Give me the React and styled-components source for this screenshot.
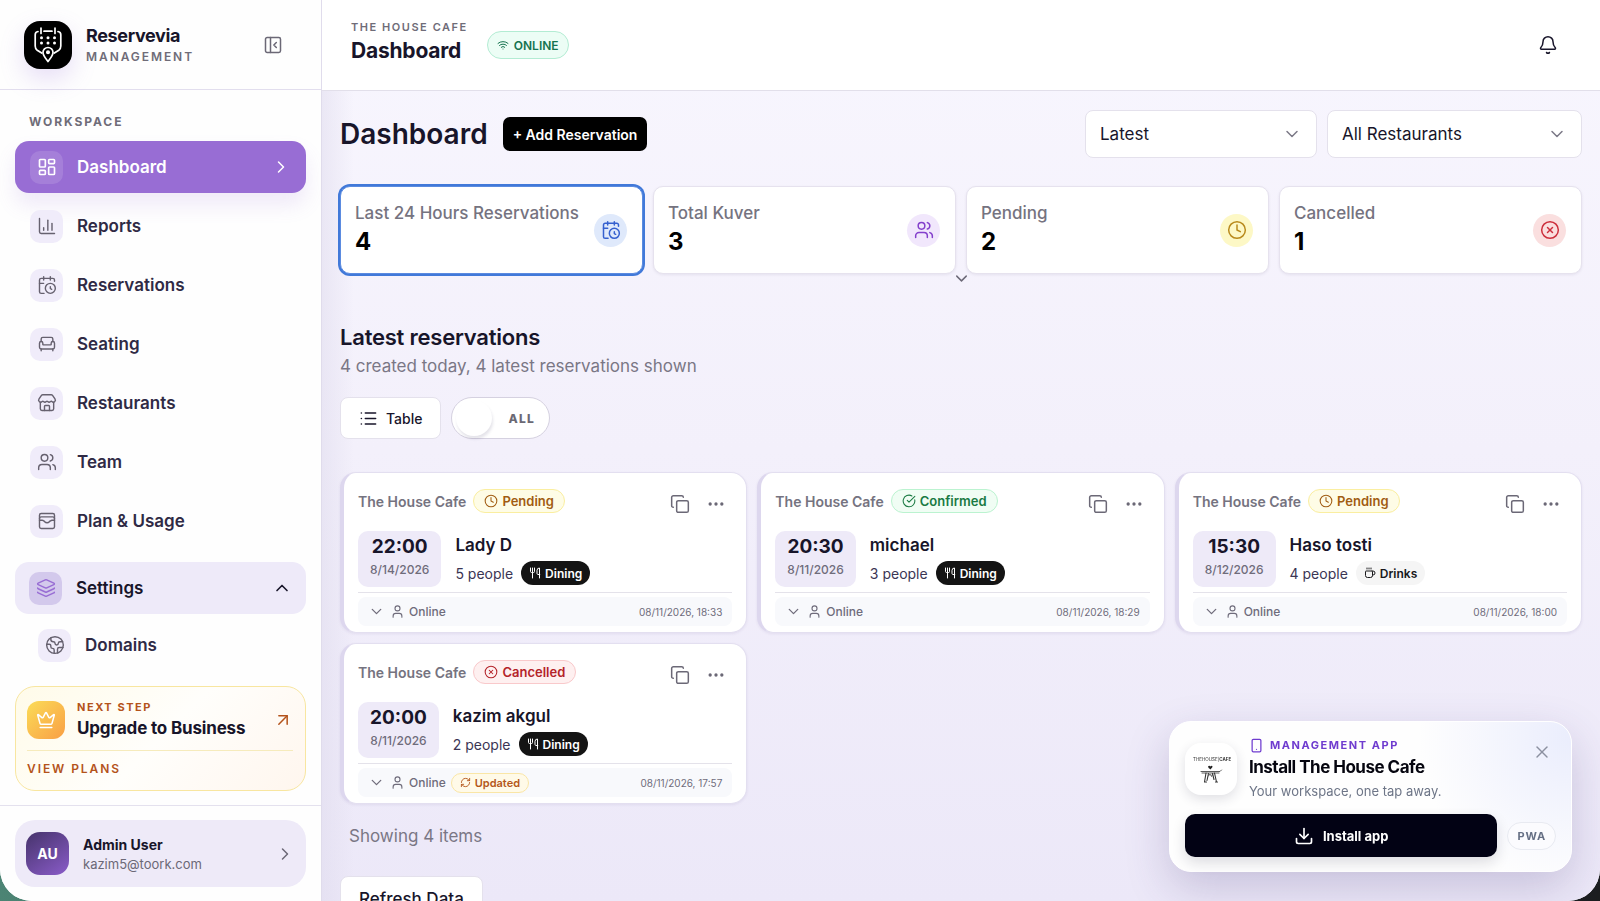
import { useState } from "react";
import styled, { createGlobalStyle, css } from "styled-components";
import {
    Armchair, ArrowUpRight, Bell, CalendarClock, ChartColumn, ChevronDown, ChevronRight, ChevronUp,
    CircleCheckBig, CircleX, Clock, Coffee, Copy, Crown, Download, Earth, Ellipsis, Layers,
    LayoutDashboard, List, PanelLeftClose, RefreshCw, Smartphone, Store, User, Users, Utensils,
    WalletCards, Wifi, X
} from "lucide-react";

const GlobalStyle = createGlobalStyle`
    * { box-sizing: border-box; }
    body {
        margin: 0;
        background: linear-gradient(90deg, #4c8474 0%, #222a2a 60%, #1c1e20 100%);
        font-family: Inter, "Liberation Sans", sans-serif;
        color: #18152a;
    }
    button, select, input { font-family: inherit; }
    button { cursor: pointer; }
    h1, h2, p { margin: 0; }
    svg { flex-shrink: 0; display: block; }
`;

const Shell = styled.div`
    display: grid;
    grid-template-columns: 322px minmax(0, 1fr);
    height: 100vh;
    overflow: hidden;
    background: #fff;
    border-radius: 0 0 32px 32px;
`;

/* ---------- Sidebar ---------- */

const Sidebar = styled.aside`
    display: flex;
    flex-direction: column;
    min-height: 0;
    background: #fefefe;
    border-right: 1px solid #e0dcec;
`;

const Brand = styled.div`
    display: flex;
    align-items: center;
    height: 90px;
    flex-shrink: 0;
    padding: 0 36px 0 24px;
    border-bottom: 1px solid #e2deee;
`;

const BrandMark = styled.div`
    display: flex;
    align-items: center;
    justify-content: center;
    width: 48px;
    height: 48px;
    border-radius: 16px;
    background: #000;
    box-shadow: 0 10px 24px rgba(150, 110, 220, 0.22);
`;

const BrandText = styled.div`
    flex: 1;
    margin-left: 14px;
`;

const BrandName = styled.div`
    font-size: 18px;
    line-height: 24px;
    font-weight: 700;
    letter-spacing: -0.02em;
`;

const Eyebrow = styled.div`
    font-size: ${(p) => (p.$small ? 11 : 12)}px;
    line-height: ${(p) => (p.$small ? 16 : 18)}px;
    font-weight: ${(p) => p.$weight || 600};
    letter-spacing: ${(p) => (p.$small ? 0.14 : 0.16)}em;
    text-transform: uppercase;
    color: ${(p) => p.$color || "#6f6c78"};
`;

const IconButton = styled.button`
    display: flex;
    align-items: center;
    justify-content: center;
    width: ${(p) => p.$size || 24}px;
    height: ${(p) => p.$size || 24}px;
    padding: 0;
    border: none;
    background: none;
    color: ${(p) => p.$color || "#6b6876"};
`;

const Nav = styled.nav`
    flex: 1;
    min-height: 0;
    overflow: hidden;
    padding: 23px 15px 0;
`;

const NavTitle = styled.div`
    padding-left: 14px;
    margin-bottom: 10px;
`;

const NavList = styled.div`
    display: flex;
    flex-direction: column;
    gap: 7px;
`;

const NavItem = styled.a`
    display: flex;
    align-items: center;
    height: 52px;
    padding: 0 15px;
    border-radius: 14px;
    color: #2f2a45;
    font-size: 17px;
    font-weight: 600;
    text-decoration: none;

    ${(p) => p.$active && css`
        background: #986dd4;
        color: #fff;
        box-shadow: 0 12px 20px rgba(152, 109, 212, 0.14);
    `}
    ${(p) => p.$open && css`
        margin-top: 8px;
        background: #eeeaf9;
        color: #18152a;
        padding: 0 14px;
    `}
    ${(p) => p.$child && css`
        margin-top: -2px;
        padding-left: 23px;
    `}
`;

const NavIcon = styled.span`
    display: flex;
    align-items: center;
    justify-content: center;
    width: 33px;
    height: 33px;
    margin-right: 14px;
    border-radius: 10px;
    background: ${(p) => p.$bg || "#f0ecfa"};
    color: ${(p) => p.$color || "#66616f"};
`;

const NavLabel = styled.span`
    flex: 1;
`;

const UpgradeCard = styled.a`
    display: block;
    flex-shrink: 0;
    margin: 0 15px 14px;
    padding: 12px 12px 12px 11px;
    border: 1px solid #f8e6a0;
    border-radius: 20px;
    background: linear-gradient(135deg, #fffbe9 0%, #fffefb 50%, #fff6ee 100%);
    color: inherit;
    text-decoration: none;
`;

const UpgradeTop = styled.div`
    display: flex;
    align-items: center;
    padding-bottom: 9px;
    border-bottom: 1px solid #f6ebbc;
`;

const CrownBox = styled.div`
    display: flex;
    align-items: center;
    justify-content: center;
    width: 38px;
    height: 38px;
    margin-right: 12px;
    border-radius: 12px;
    background: linear-gradient(135deg, #fbdc57, #f99f45);
    color: #fff;
`;

const UpgradeTitle = styled.div`
    font-size: 17px;
    line-height: 26px;
    font-weight: 700;
    letter-spacing: -0.01em;
`;

const Grow = styled.div`
    flex: 1;
    min-width: 0;
`;

const ViewPlans = styled.div`
    padding-top: 9px;
`;

const SidebarFooter = styled.div`
    flex-shrink: 0;
    padding: 14px 15px;
    border-top: 1px solid #e4e1ee;
`;

const UserCard = styled.button`
    display: flex;
    align-items: center;
    width: 100%;
    height: 67px;
    padding: 0 11px;
    border: none;
    border-radius: 20px;
    background: #eeeaf8;
    color: #6b6876;
    text-align: left;
`;

const Avatar = styled.span`
    display: flex;
    align-items: center;
    justify-content: center;
    width: 43px;
    height: 43px;
    margin-right: 14px;
    border-radius: 14px;
    background: linear-gradient(145deg, #46336b, #8a5cc9);
    color: #fff;
    font-size: 14px;
    font-weight: 700;
`;

const UserName = styled.div`
    font-size: 14px;
    line-height: 20px;
    font-weight: 700;
    color: #18152a;
`;

const UserMail = styled.div`
    font-size: 13px;
    line-height: 18px;
`;

/* ---------- Main column ---------- */

const Main = styled.main`
    display: flex;
    flex-direction: column;
    min-height: 0;
    overflow: hidden;
    background:
        linear-gradient(90deg, rgba(222, 218, 236, 0.5), rgba(222, 218, 236, 0) 32px),
        linear-gradient(180deg, #f8f6fe 0%, #f3f0fb 50%, #ece8f8 100%);
`;

const TopBar = styled.header`
    display: flex;
    align-items: center;
    height: 91px;
    flex-shrink: 0;
    padding: 0 36px 0 29px;
    border-bottom: 1px solid #e2dfea;
    background: #fff;
`;

const TopTitle = styled.div`
    margin-right: 19px;
    padding-bottom: 4px;
`;

const TopName = styled.div`
    font-size: 21px;
    line-height: 32px;
    font-weight: 700;
    letter-spacing: -0.01em;
`;

const OnlinePill = styled.span`
    display: flex;
    align-items: center;
    gap: 5px;
    height: 28px;
    padding: 0 9px;
    border: 1px solid #b3ecd3;
    border-radius: 14px;
    background: #ecfdf5;
    color: #15734f;
    font-size: 12px;
    font-weight: 600;
`;

const Content = styled.div`
    flex: 1;
    min-height: 0;
    overflow: hidden;
    padding: 19px 18px 0;
`;

const PageHead = styled.div`
    display: flex;
    align-items: center;
    gap: 10px;
    margin-bottom: 28px;
`;

const PageTitle = styled.h1`
    margin-right: 5px;
    font-size: 28px;
    line-height: 36px;
    font-weight: 600;
`;

const AddButton = styled.button`
    height: 34px;
    margin-right: auto;
    padding: 0 10px;
    border: none;
    border-radius: 7px;
    background: #000;
    color: #fff;
    font-size: 14px;
    font-weight: 600;
`;

const SelectWrap = styled.label`
    position: relative;
    flex: 0 0 ${(p) => p.$width}px;

    svg {
        position: absolute;
        right: 15px;
        top: 14px;
        color: #7c7987;
        pointer-events: none;
    }
`;

const Select = styled.select`
    appearance: none;
    width: 100%;
    height: 48px;
    padding: 0 40px 0 14px;
    border: 1px solid #e4e1ec;
    border-radius: 8px;
    background: #fff;
    color: #18152a;
    font-size: 17px;
`;

const Stats = styled.div`
    display: grid;
    grid-template-columns: repeat(4, minmax(0, 1fr));
    gap: 10px;
`;

const StatCard = styled.button`
    display: flex;
    align-items: center;
    height: 88px;
    padding: 0 15px 0 14px;
    border: 1px solid ${(p) => (p.$selected ? "#5b8be0" : "#e6e2ee")};
    border-radius: 10px;
    background: #fff;
    box-shadow: ${(p) => (p.$selected ? "0 0 0 2px #4179d9" : "0 1px 3px rgba(40, 30, 80, 0.08)")};
    text-align: left;
`;

const StatLabel = styled.div`
    font-size: 17px;
    line-height: 24px;
    font-weight: 500;
    color: #757380;
`;

const StatValue = styled.div`
    font-size: 24px;
    line-height: 34px;
    font-weight: 700;
    color: #000;
`;

const StatIcon = styled.span`
    display: flex;
    align-items: center;
    justify-content: center;
    width: 33px;
    height: 33px;
    border-radius: 50%;
    background: ${(p) => p.$bg};
    color: ${(p) => p.$color};
`;

const Expander = styled.button`
    display: flex;
    justify-content: center;
    width: 100%;
    height: 16px;
    margin-bottom: 31px;
    padding: 0;
    border: none;
    background: none;
    color: #6b6876;
    line-height: 0;

    svg {
        margin-top: -5px;
    }
`;

const SectionTitle = styled.h2`
    font-size: 22px;
    line-height: 32px;
    font-weight: 600;
    letter-spacing: -0.01em;
`;

const Muted = styled.p`
    font-size: 17px;
    line-height: 26px;
    color: #7a7785;
`;

const Tools = styled.div`
    display: flex;
    gap: 10px;
    margin: 18px 0 33px;
`;

const OutlineButton = styled.button`
    display: flex;
    align-items: center;
    gap: 8px;
    height: ${(p) => (p.$large ? 46 : 42)}px;
    padding: 0 18px;
    border: 1px solid #e4e1ec;
    border-radius: 8px;
    background: #fff;
    color: #18152a;
    font-size: ${(p) => (p.$large ? 17 : 14)}px;
    font-weight: 500;
`;

const Toggle = styled.label`
    display: flex;
    align-items: center;
    width: 99px;
    height: 42px;
    padding-left: 4px;
    border: 1px solid #d5d1e0;
    border-radius: 21px;
    background: #fff;
    color: #6b6974;
    font-size: 12px;
    font-weight: 800;
    letter-spacing: 0.1em;
    cursor: pointer;

    input {
        appearance: none;
        width: 36px;
        height: 36px;
        margin: 0 16px 0 0;
        border-radius: 50%;
        background: #fff;
        box-shadow: 1px 3px 3px rgba(40, 30, 80, 0.12);
    }
`;

const Cards = styled.div`
    display: grid;
    grid-template-columns: repeat(3, minmax(0, 1fr));
    gap: 10px;
`;

const Card = styled.article`
    padding: 15px 14px 6px;
    border: 1px solid #e3dff0;
    border-left: 4px solid #ddd7ee;
    border-radius: 16px;
    background: #fff;
    box-shadow: 0 1px 3px rgba(60, 40, 110, 0.08);
`;

const CardHead = styled.div`
    display: flex;
    align-items: flex-start;
    height: 43px;
`;

const CardPlace = styled.div`
    flex: 1;
    display: flex;
    align-items: center;
    gap: 7px;
    height: 26px;
    font-size: 14px;
    font-weight: 600;
    color: #757380;
`;

const badgeTones = {
    Pending: css`border-color: #faeea0; background: #fefce6; color: #a15c12;`,
    Confirmed: css`border-color: #bbf3d0; background: #f0fdf4; color: #1a7a43;`,
    Cancelled: css`border-color: #f9c9cb; background: #fef0f0; color: #b42329;`,
    Updated: css`border-color: #fae6a6; background: #fffae8; color: #b4571a;`
};

const Badge = styled.span`
    display: flex;
    align-items: center;
    gap: 4px;
    height: ${(p) => (p.$small ? 20 : 24)}px;
    padding: 0 ${(p) => (p.$small ? 8 : 10)}px;
    border: 1px solid;
    border-radius: 12px;
    font-size: ${(p) => (p.$small ? 11 : 13)}px;
    font-weight: 600;
    ${(p) => badgeTones[p.$tone]}
`;

const CardActions = styled.div`
    display: flex;
    gap: 4px;
`;

const CardBody = styled.div`
    display: flex;
    gap: 14px;
    padding-bottom: 5px;
    border-bottom: 1px solid #e4e2ea;
`;

const TimeBox = styled.div`
    height: 56px;
    padding: 3px 12px 0;
    border-radius: 10px;
    background: #eeeaf8;
    text-align: center;
`;

const Time = styled.div`
    font-size: 19px;
    line-height: 26px;
    font-weight: 700;
`;

const Day = styled.div`
    font-size: 12px;
    line-height: 20px;
    font-weight: 500;
    color: #6f6c7b;
`;

const Guest = styled.div`
    font-size: 17px;
    line-height: 28px;
    font-weight: 600;
`;

const Party = styled.div`
    display: flex;
    align-items: center;
    gap: 8px;
    height: 28px;
    font-size: 14px;
    color: #3b3554;
`;

const Service = styled.span`
    display: flex;
    align-items: center;
    gap: 4px;
    height: 24px;
    padding: 0 8px;
    border-radius: 12px;
    background: ${(p) => (p.$dark ? "#141414" : "#f5f5f5")};
    color: ${(p) => (p.$dark ? "#fff" : "#18181b")};
    font-size: 12px;
    font-weight: 600;
`;

const CardFoot = styled.div`
    display: flex;
    align-items: center;
    height: 29px;
    margin-top: 4px;
    padding: 0 10px;
    border-radius: 8px;
    background: #f8f9fc;
    color: #6f6c7b;
    font-size: 12px;
    font-weight: 500;
`;

const Source = styled.span`
    display: flex;
    align-items: center;
    gap: 4px;
    margin: 0 5px;
`;

const Created = styled.time`
    margin-left: auto;
    font-size: 10px;
    font-weight: 400;
`;

const Showing = styled.div`
    padding: 19px 9px 27px;
`;

/* ---------- Install prompt ---------- */

const Prompt = styled.section`
    position: fixed;
    right: 28px;
    bottom: 29px;
    width: 403px;
    padding: 16px 15px 14px;
    border: 1px solid #fff;
    border-radius: 22px;
    background:
        radial-gradient(circle at 100% 10%, rgba(226, 230, 252, 0.7), rgba(255, 255, 255, 0) 36%),
        #fefefe;
    box-shadow: 0 16px 44px rgba(70, 55, 120, 0.22);
`;

const PromptTop = styled.div`
    display: flex;
    align-items: flex-start;
`;

const CafeLogo = styled.div`
    width: 52px;
    height: 52px;
    margin: 5px 12px 0 0;
    border-radius: 16px;
    background: #fff;
    box-shadow: 0 4px 12px rgba(40, 40, 70, 0.14);
`;

const PromptLabel = styled.div`
    display: flex;
    align-items: center;
    gap: 6px;
    height: 14px;
    color: #6f3ccf;
`;

const PromptTitle = styled.h2`
    margin-top: 2px;
    font-size: 17px;
    line-height: 26px;
    font-weight: 700;
    letter-spacing: -0.03em;
    color: #05050f;
`;

const PromptText = styled.p`
    font-size: 13px;
    line-height: 22px;
    color: #6d7587;
`;

const PromptActions = styled.div`
    display: flex;
    align-items: center;
    gap: 10px;
    margin-top: 12px;
`;

const InstallButton = styled.button`
    flex: 1;
    display: flex;
    align-items: center;
    justify-content: center;
    gap: 9px;
    height: 43px;
    border: none;
    border-radius: 10px;
    background: #020214;
    color: #fff;
    font-size: 13px;
    font-weight: 700;
    box-shadow: 0 6px 14px rgba(20, 20, 50, 0.14);
`;

const Pwa = styled.span`
    display: flex;
    align-items: center;
    height: 28px;
    padding: 0 9px;
    border: 1px solid #e8eaf1;
    border-radius: 14px;
    background: #fbfbfe;
    color: #667085;
    font-size: 11px;
    font-weight: 700;
    letter-spacing: 0.08em;
`;

const navItems = [
    { label: "Dashboard", icon: LayoutDashboard, active: true },
    { label: "Reports", icon: ChartColumn },
    { label: "Reservations", icon: CalendarClock },
    { label: "Seating", icon: Armchair },
    { label: "Restaurants", icon: Store },
    { label: "Team", icon: Users },
    { label: "Plan & Usage", icon: WalletCards }
];

const stats = [
    { label: "Last 24 Hours Reservations", value: 4, icon: CalendarClock, bg: "#dfe9fb", color: "#3560cf" },
    { label: "Total Kuver", value: 3, icon: Users, bg: "#f1e7fc", color: "#8440cc" },
    { label: "Pending", value: 2, icon: Clock, bg: "#fdf8c6", color: "#b98a1c" },
    { label: "Cancelled", value: 1, icon: CircleX, bg: "#fadfdf", color: "#cc2f3c" }
];

const reservations = [
    { status: "Pending", time: "22:00", day: "8/14/2026", guest: "Lady D", people: 5, service: "Dining", created: "08/11/2026, 18:33" },
    { status: "Confirmed", time: "20:30", day: "8/11/2026", guest: "michael", people: 3, service: "Dining", created: "08/11/2026, 18:29" },
    { status: "Pending", time: "15:30", day: "8/12/2026", guest: "Haso tosti", people: 4, service: "Drinks", created: "08/11/2026, 18:00" },
    { status: "Cancelled", time: "20:00", day: "8/11/2026", guest: "kazim akgul", people: 2, service: "Dining", created: "08/11/2026, 17:57", updated: true }
];

const statusIcons = { Pending: Clock, Confirmed: CircleCheckBig, Cancelled: CircleX };

function BrandLogo() {
    return (
        <svg width="48" height="48" viewBox="0 0 48 48" fill="none" stroke="#fff" strokeWidth="1.7" strokeLinecap="round" strokeLinejoin="round">
            <path d="M14 10.500c-1.800.200-2.800 1.500-2.800 3.200V25c0 2 .500 3.200 2 4.200l4.500 2.800" />
            <path d="M20 10.200h8" />
            <path d="M34 10.500c1.800.200 2.800 1.500 2.800 3.200V25c0 2-.500 3.200-2 4.200l-4.500 2.800" />
            <path d="M17 7v5.500M31 7v5.500" />
            {[17.5, 24, 30.5].map((x) => [16.8, 22].map((y) => (
                <circle key={`${x}-${y}`} cx={x} cy={y} r="1.5" fill="#fff" stroke="none" />
            )))}
            <path d="M24 40.500c-2.800-3.600-5-6-5-9a5 5 0 0 1 10 0c0 3-2.200 5.400-5 9z" fill="#000" />
            <circle cx="24" cy="31.200" r="1.200" fill="#fff" />
        </svg>
    );
}

function CafeDrawing() {
    return (
        <svg width="52" height="52" viewBox="0 0 52 52" fill="none" stroke="#333" strokeLinecap="round">
            <text x="8" y="18" fontSize="4.500" fill="#333" stroke="none">THEHOUSE|<tspan fontWeight="700">CAFE</tspan></text>
            <path d="M23 23.500c1-1.200 2-.800 2.500 0 .600-1 1.800-1 2 0 .200 1.200-1.500 2-2 3-1-.800-2.500-1.800-2.500-3z" fill="#222" stroke="none" />
            <path d="M16 28.500h19l1.500-1.500M17 30h17" strokeWidth=".8" />
            <path d="M21 30l-1.500 9M23.500 30.500l-1.500 7M29.500 30l2 9M27.500 30.500l1.500 6M19.500 39h2M30.500 39h2" strokeWidth="1.1" />
            <path d="M23.500 33l1.500-2 1.500 2.500 1-2.500" strokeWidth=".7" />
        </svg>
    );
}

function ReservationCard({ item }) {
    const StatusIcon = statusIcons[item.status];
    const ServiceIcon = item.service === "Dining" ? Utensils : Coffee;

    return (
        <Card>
            <CardHead>
                <CardPlace>
                    The House Cafe
                    <Badge $tone={item.status}><StatusIcon size={14} strokeWidth={1.8} />{item.status}</Badge>
                </CardPlace>
                <CardActions>
                    <IconButton $size={32} aria-label="Copy"><Copy size={20} strokeWidth={1.8} /></IconButton>
                    <IconButton $size={32} aria-label="More"><Ellipsis size={20} /></IconButton>
                </CardActions>
            </CardHead>
            <CardBody>
                <TimeBox>
                    <Time>{item.time}</Time>
                    <Day>{item.day}</Day>
                </TimeBox>
                <div>
                    <Guest>{item.guest}</Guest>
                    <Party>
                        {item.people} people
                        <Service $dark={item.service === "Dining"}><ServiceIcon size={12} />{item.service}</Service>
                    </Party>
                </div>
            </CardBody>
            <CardFoot>
                <ChevronDown size={17} strokeWidth={1.8} />
                <Source><User size={15} strokeWidth={1.8} />Online</Source>
                {item.updated && <Badge $small $tone="Updated"><RefreshCw size={11} />Updated</Badge>}
                <Created>{item.created}</Created>
            </CardFoot>
        </Card>
    );
}

function App() {
    const [selected, setSelected] = useState(0);
    const [onlyToday, setOnlyToday] = useState(false);
    const [promptOpen, setPromptOpen] = useState(true);

    return (
        <>
            <GlobalStyle />
            <Shell>
                <Sidebar>
                    <Brand>
                        <BrandMark><BrandLogo /></BrandMark>
                        <BrandText>
                            <BrandName>Reservevia</BrandName>
                            <Eyebrow>Management</Eyebrow>
                        </BrandText>
                        <IconButton aria-label="Collapse sidebar"><PanelLeftClose size={20} strokeWidth={1.8} /></IconButton>
                    </Brand>

                    <Nav>
                        <NavTitle><Eyebrow $weight={700}>Workspace</Eyebrow></NavTitle>
                        <NavList>
                            {navItems.map(({ label, icon: Icon, active }) => (
                                <NavItem key={label} href="#" $active={active}>
                                    <NavIcon $bg={active && "rgba(255, 255, 255, 0.13)"} $color={active && "#fff"}>
                                        <Icon size={20} strokeWidth={active ? 2 : 1.7} />
                                    </NavIcon>
                                    <NavLabel>{label}</NavLabel>
                                    {active && <ChevronRight size={20} strokeWidth={1.8} />}
                                </NavItem>
                            ))}
                            <NavItem href="#" $open>
                                <NavIcon $bg="#d3c9ec" $color="#986dd4"><Layers size={20} strokeWidth={1.8} /></NavIcon>
                                <NavLabel>Settings</NavLabel>
                                <ChevronUp size={20} />
                            </NavItem>
                            <NavItem href="#" $child>
                                <NavIcon><Earth size={20} strokeWidth={1.7} /></NavIcon>
                                <NavLabel>Domains</NavLabel>
                            </NavItem>
                        </NavList>
                    </Nav>

                    <UpgradeCard href="#">
                        <UpgradeTop>
                            <CrownBox><Crown size={20} strokeWidth={1.8} /></CrownBox>
                            <Grow>
                                <Eyebrow $small $weight={700} $color="#b4531b">Next step</Eyebrow>
                                <UpgradeTitle>Upgrade to Business</UpgradeTitle>
                            </Grow>
                            <ArrowUpRight size={20} strokeWidth={1.8} color="#b4531b" />
                        </UpgradeTop>
                        <ViewPlans><Eyebrow $color="#b4531b">View plans</Eyebrow></ViewPlans>
                    </UpgradeCard>

                    <SidebarFooter>
                        <UserCard>
                            <Avatar>AU</Avatar>
                            <Grow>
                                <UserName>Admin User</UserName>
                                <UserMail>kazim5@toork.com</UserMail>
                            </Grow>
                            <ChevronRight size={20} strokeWidth={1.8} />
                        </UserCard>
                    </SidebarFooter>
                </Sidebar>

                <Main>
                    <TopBar>
                        <TopTitle>
                            <Eyebrow $small>The House Cafe</Eyebrow>
                            <TopName>Dashboard</TopName>
                        </TopTitle>
                        <OnlinePill><Wifi size={12} />ONLINE</OnlinePill>
                        <Grow />
                        <IconButton $size={32} $color="#18152a" aria-label="Notifications"><Bell size={20} strokeWidth={1.8} /></IconButton>
                    </TopBar>

                    <Content>
                        <PageHead>
                            <PageTitle>Dashboard</PageTitle>
                            <AddButton>+ Add Reservation</AddButton>
                            <SelectWrap $width={232}>
                                <Select aria-label="Period"><option>Latest</option></Select>
                                <ChevronDown size={20} strokeWidth={1.8} />
                            </SelectWrap>
                            <SelectWrap $width={255}>
                                <Select aria-label="Restaurant"><option>All Restaurants</option></Select>
                                <ChevronDown size={20} strokeWidth={1.8} />
                            </SelectWrap>
                        </PageHead>

                        <Stats>
                            {stats.map(({ label, value, icon: Icon, bg, color }, i) => (
                                <StatCard key={label} $selected={i === selected} onClick={() => setSelected(i)}>
                                    <Grow>
                                        <StatLabel>{label}</StatLabel>
                                        <StatValue>{value}</StatValue>
                                    </Grow>
                                    <StatIcon $bg={bg} $color={color}><Icon size={20} strokeWidth={1.8} /></StatIcon>
                                </StatCard>
                            ))}
                        </Stats>
                        <Expander aria-label="Show more"><ChevronDown size={19} strokeWidth={1.8} /></Expander>

                        <SectionTitle>Latest reservations</SectionTitle>
                        <Muted>4 created today, 4 latest reservations shown</Muted>

                        <Tools>
                            <OutlineButton><List size={19} />Table</OutlineButton>
                            <Toggle>
                                <input type="checkbox" checked={onlyToday} onChange={() => setOnlyToday(!onlyToday)} />
                                ALL
                            </Toggle>
                        </Tools>

                        <Cards>
                            {reservations.map((item) => <ReservationCard key={item.created} item={item} />)}
                        </Cards>

                        <Showing><Muted>Showing 4 items</Muted></Showing>
                        <OutlineButton $large>Refresh Data</OutlineButton>
                    </Content>
                </Main>
            </Shell>

            {promptOpen && (
                <Prompt>
                    <PromptTop>
                        <CafeLogo><CafeDrawing /></CafeLogo>
                        <Grow>
                            <PromptLabel>
                                <Smartphone size={15} />
                                <Eyebrow $small $weight={700} $color="#6f3ccf">Management app</Eyebrow>
                            </PromptLabel>
                            <PromptTitle>Install The House Cafe</PromptTitle>
                            <PromptText>Your workspace, one tap away.</PromptText>
                        </Grow>
                        <IconButton $size={28} $color="#8b90a0" aria-label="Close" onClick={() => setPromptOpen(false)}>
                            <X size={20} strokeWidth={1.7} />
                        </IconButton>
                    </PromptTop>
                    <PromptActions>
                        <InstallButton><Download size={20} />Install app</InstallButton>
                        <Pwa>PWA</Pwa>
                    </PromptActions>
                </Prompt>
            )}
        </>
    );
}

export default App;
